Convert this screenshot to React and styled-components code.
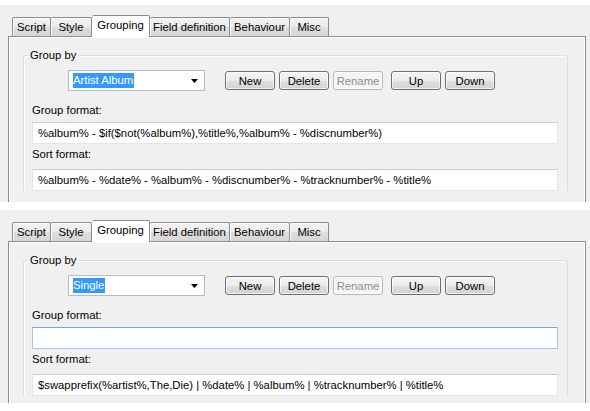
import React from 'react';
import styled, { createGlobalStyle } from 'styled-components';

const GlobalStyle = createGlobalStyle`
    body {
        margin: 0;
        background: #ffffff;
        font-family: "Liberation Sans", Arial, sans-serif;
        font-size: 11.3px;
        color: #000000;
    }
`;

const Page = styled.div`
    width: 590px;
    padding-top: 5px;
    display: flex;
    flex-direction: column;
    gap: 8px;
`;

const Panel = styled.div`
    height: ${(p) => p.$height}px;
    overflow: hidden;
    background: #f0f0f0;
    padding: 10px 4px 0 8px;
    box-sizing: border-box;
`;

const TabStrip = styled.div`
    display: flex;
    align-items: flex-end;
    padding-left: 4px;
`;

const Tab = styled.div`
    position: relative;
    box-sizing: border-box;
    width: ${(p) => p.$width}px;
    height: ${(p) => (p.$active ? 22 : 19)}px;
    margin-bottom: ${(p) => (p.$active ? -1 : 0)}px;
    padding-top: 3px;
    text-align: center;
    border: 1px solid #898c95;
    border-left-width: ${(p) => (p.$first ? 1 : 0)}px;
    border-bottom: none;
    border-radius: 2px 2px 0 0;
    background: ${(p) =>
        p.$active
            ? '#ffffff'
            : 'linear-gradient(#f3f3f3 0%, #ebebeb 50%, #dedede 51%, #d6d6d6 100%)'};
    box-shadow: ${(p) => (p.$active ? 'none' : 'inset 1px 1px 0 #fbfbfb')};
    z-index: ${(p) => (p.$active ? 1 : 0)};
    white-space: nowrap;
    line-height: 13px;
`;

const TabPane = styled.div`
    border: 1px solid #898c95;
    border-bottom: none;
    box-shadow: inset 1px 1px 0 #ffffff, inset -1px 0 0 #ffffff;
    background: #f0f0f0;
    height: 200px;
    padding: 11px 17px 0 14px;
`;

const GroupBox = styled.fieldset`
    margin: 0;
    padding: 0;
    min-width: 0;
    border: 1px solid #d5dfe5;
    border-bottom: none;
    border-radius: 3px 3px 0 0;
    box-shadow: inset 1px 1px 0 #ffffff;
`;

const Legend = styled.legend`
    margin-left: 4px;
    padding: 0 2px;
    line-height: 14px;
`;

const GroupBody = styled.div`
    padding: 8px 9px 0 8px;
`;

const ToolRow = styled.div`
    display: flex;
    align-items: center;
    height: 21px;
`;

const Combo = styled.div`
    box-sizing: border-box;
    width: 137px;
    height: 21px;
    margin-left: 36px;
    margin-right: 20px;
    border: 1px solid #b3bcc8;
    background: #ffffff;
    display: flex;
    align-items: center;
    padding: 0 6px 0 4px;
`;

const Selected = styled.span`
    background: #3399ff;
    color: #ffffff;
    line-height: 15px;
    padding-right: 1px;
`;

const Arrow = styled.svg`
    margin-left: auto;
`;

const Button = styled.button`
    box-sizing: border-box;
    width: 50px;
    height: 19px;
    margin-left: ${(p) => p.$gap || 0}px;
    padding: 0;
    font: inherit;
    font-weight: 400;
    border: 1px solid ${(p) => (p.disabled ? '#b5b8bc' : '#707070')};
    border-radius: 3px;
    color: ${(p) => (p.disabled ? '#8d8d8d' : '#000000')};
    background: ${(p) =>
        p.disabled
            ? '#f4f4f4'
            : 'linear-gradient(#f4f4f4 0%, #ececec 50%, #dfdfdf 51%, #d2d2d2 100%)'};
    box-shadow: inset 0 0 0 1px rgba(255, 255, 255, 0.7);
`;

const Label = styled.div`
    line-height: 14px;
    margin-top: ${(p) => p.$top}px;
    margin-bottom: ${(p) => p.$bottom}px;
`;

const TextBox = styled.div`
    box-sizing: border-box;
    height: 22px;
    background: #ffffff;
    border: 1px solid ${(p) => (p.$focused ? '#a6c8ea' : '#e2e6ea')};
    border-top-color: ${(p) => (p.$focused ? '#7ea9d6' : '#c9ccd1')};
    display: flex;
    align-items: center;
    padding: 0 5px;
    white-space: nowrap;
    overflow: hidden;
`;

const tabs = [
    { name: 'Script', width: 39 },
    { name: 'Style', width: 41 },
    { name: 'Grouping', width: 58 },
    { name: 'Field definition', width: 80 },
    { name: 'Behaviour', width: 60 },
    { name: 'Misc', width: 39 },
];

const GroupingPanel = ({ height, groupBy, groupFormat, sortFormat, focused }) => (
    <Panel $height={height}>
        <TabStrip>
            {tabs.map((t, i) => (
                <Tab
                    key={t.name}
                    $first={i === 0}
                    $width={t.width}
                    $active={t.name === 'Grouping'}
                >
                    {t.name}
                </Tab>
            ))}
        </TabStrip>
        <TabPane>
            <GroupBox>
                <Legend>Group by</Legend>
                <GroupBody>
                    <ToolRow>
                        <Combo>
                            <Selected>{groupBy}</Selected>
                            <Arrow width="7" height="4" viewBox="0 0 7 4">
                                <path d="M0 0h7L3.5 4z" fill="#000" />
                            </Arrow>
                        </Combo>
                        <Button>New</Button>
                        <Button $gap={4}>Delete</Button>
                        <Button $gap={4} disabled>Rename</Button>
                        <Button $gap={8}>Up</Button>
                        <Button $gap={4}>Down</Button>
                    </ToolRow>
                    <Label $top={12} $bottom={5}>Group format:</Label>
                    <TextBox $focused={focused}>{groupFormat}</TextBox>
                    <Label $top={3} $bottom={8}>Sort format:</Label>
                    <TextBox>{sortFormat}</TextBox>
                </GroupBody>
            </GroupBox>
        </TabPane>
    </Panel>
);

const App = () => (
    <>
        <GlobalStyle />
        <Page>
            <GroupingPanel
                height={197}
                groupBy="Artist Album"
                groupFormat="%album% - $if($not(%album%),%title%,%album% - %discnumber%)"
                sortFormat="%album% - %date% - %album% - %discnumber% - %tracknumber% - %title%"
            />
            <GroupingPanel
                height={193}
                focused
                groupBy="Single"
                groupFormat=""
                sortFormat="$swapprefix(%artist%,The,Die) | %date% | %album% | %tracknumber% | %title%"
            />
        </Page>
    </>
);

export default App;
